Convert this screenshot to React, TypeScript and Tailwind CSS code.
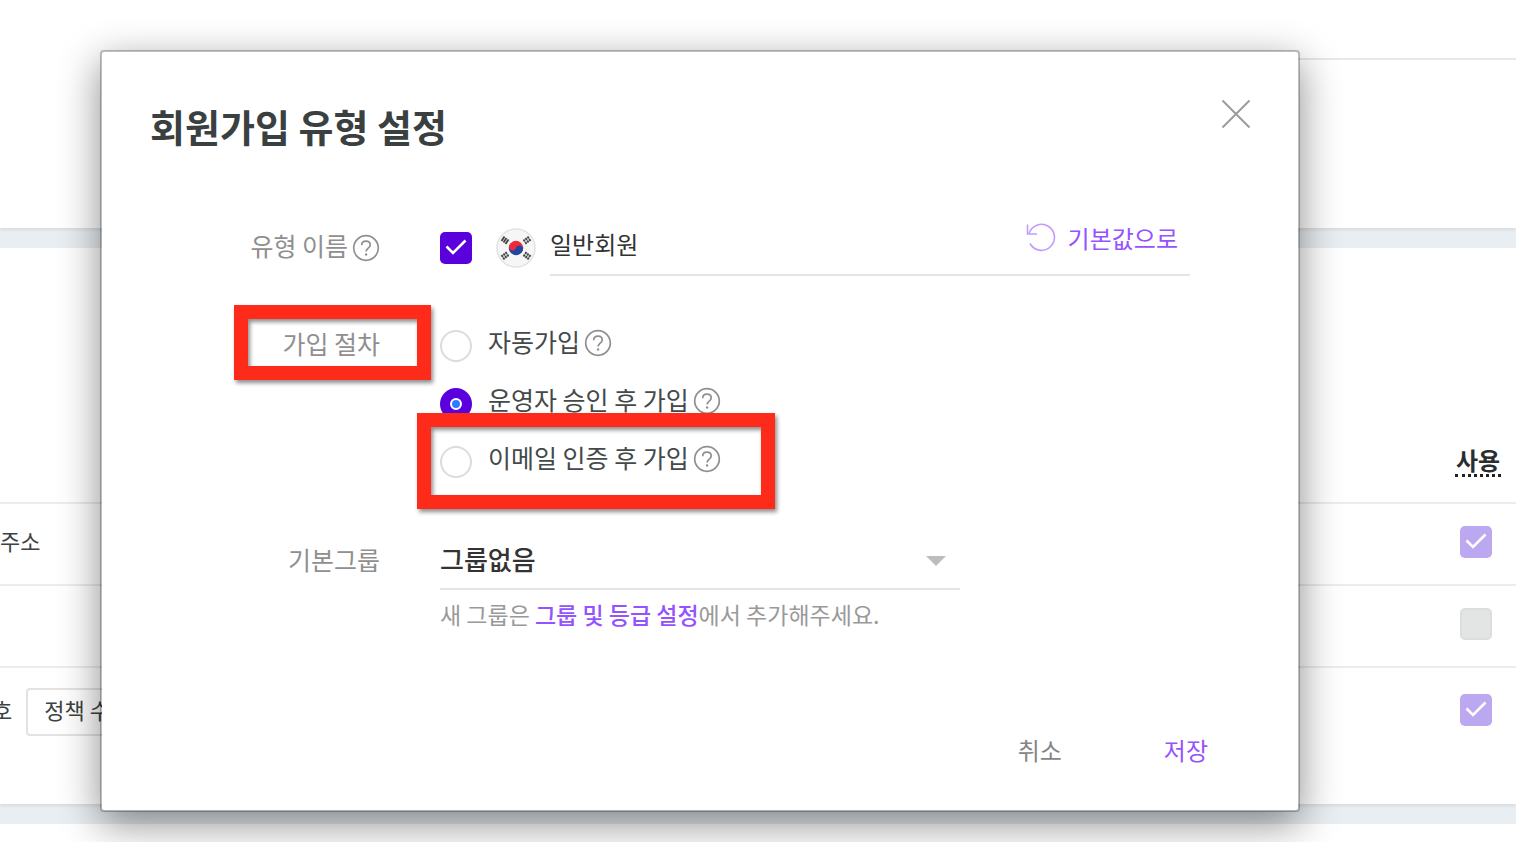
import React, { useState } from 'react'

const CheckMark = () => (
    <svg viewBox="0 0 32 32" className="pointer-events-none col-start-1 row-start-1 size-8" fill="none" stroke="white" strokeWidth="2.6" aria-hidden="true">
        <path d="M6.500 14.500l6.500 6.500L25.500 8.500" />
    </svg>
)

const HelpButton = () => (
    <button type="button" aria-label="도움말" className="ml-1 shrink-0">
        <svg viewBox="0 0 28 28" className="size-7" fill="none" stroke="#8f8f8f" strokeWidth="1.7" aria-hidden="true">
            <circle cx="14" cy="14" r="12.300" />
            <path d="M9.700 11.200c0-2.500 1.800-4 4.300-4s4.200 1.500 4.200 3.700c0 3.200-4.100 3.200-4.100 6.600" />
            <circle cx="14.100" cy="20.500" r="1.200" fill="#8f8f8f" stroke="none" />
        </svg>
    </button>
)

const KoreaFlag = () => (
    <svg viewBox="0 0 40 40" className="size-10 shrink-0" role="img" aria-label="대한민국">
        <circle cx="20" cy="20" r="19" fill="#f6f6f6" stroke="#e2e2e2" strokeWidth="1.500" />
        <g transform="rotate(20 20 20)">
            <path d="M12.800 20a7.200 7.200 0 0 1 14.400 0z" fill="#ee2b3b" />
            <path d="M12.800 20a7.200 7.200 0 0 0 14.400 0z" fill="#23469f" />
            <circle cx="16.400" cy="20" r="3.600" fill="#ee2b3b" />
            <circle cx="23.600" cy="20" r="3.600" fill="#23469f" />
        </g>
        <g stroke="#444" strokeWidth="1.900">
            <path d="M5.500 13l3-4.500M7.500 14.500l3-4.500M9.500 16l3-4.500" />
            <path d="M34.500 13l-3-4.500M32.500 14.500l-3-4.500M30.500 16l-3-4.500" strokeDasharray="2.300 0.800" />
            <path d="M5.500 27l3 4.500M7.500 25.500l3 4.500M9.500 24l3 4.500" strokeDasharray="2.300 0.800" />
            <path d="M34.500 27l-3 4.500M32.500 25.500l-3 4.500M30.500 24l-3 4.500" strokeDasharray="2.300 0.800" />
        </g>
    </svg>
)

const Highlight = ({ className }: { className: string }) => (
    <div className={`pointer-events-none absolute border-[14px] border-[#ff2b1a] drop-shadow-[2px_3px_2px_rgba(0,0,0,0.45)] ${className}`} />
)

interface IRowProps {
    id: string
    checked: boolean
    last?: boolean
    children?: React.ReactNode
}
const FieldRow = ({ id, checked, last, children }: IRowProps) => (
    <tr className={last ? '' : 'border-b-2 border-[#ececec]'}>
        <td className={last ? 'h-[84px] p-0 pt-1' : 'h-[82px] p-0 pb-2'}>{children}</td>
        <td className={last ? 'w-20 p-0' : 'w-20 p-0 pb-1'}>
            <label htmlFor={id} className="mx-auto grid size-8">
                <input
                    id={id}
                    type="checkbox"
                    aria-label="사용"
                    defaultChecked={checked}
                    disabled
                    className="col-start-1 row-start-1 size-8 appearance-none rounded-[5px] border-2 border-[#dcdedd] bg-[#e3e5e4] checked:border-0 checked:bg-[#bba8f1]"
                />
                {checked && <CheckMark />}
            </label>
        </td>
    </tr>
)

const SettingsPage = () => (
    <div className="flex min-h-screen flex-col gap-5 bg-[#e9eef2] text-[#3d4242]">
        <section className="h-[228px] bg-white pt-[58px] shadow-[0_2px_3px_rgba(0,0,0,0.08)]">
            <div className="ml-auto w-1/5 border-t-2 border-[#e8e8e8]" />
        </section>
        <section className="bg-white pt-[170px] pb-[53px] shadow-[0_2px_3px_rgba(0,0,0,0.08)]">
            <table className="w-full border-collapse text-[22px]">
                <thead>
                    <tr className="border-b-2 border-[#ececec]">
                        <th className="h-[85px]" />
                        <th className="w-20 p-0 pl-1 text-center text-2xl font-bold text-[#2b2e2e]">
                            <span className="inline-block border-b-3 border-dotted border-[#222] px-px leading-7">사용</span>
                        </th>
                    </tr>
                </thead>
                <tbody>
                    <FieldRow id="use-email" checked>주소</FieldRow>
                    <FieldRow id="use-name" checked={false} />
                    <FieldRow id="use-password" checked last>
                        <div className="-ml-2 flex items-center">
                            <span className="pb-1">호</span>
                            <button type="button" className="ml-[14px] h-12 rounded border-2 border-[#e3e3e3] px-4 pb-1 text-[22px]">정책 수정</button>
                        </div>
                    </FieldRow>
                </tbody>
            </table>
        </section>
        <section className="flex-1 bg-white" />
    </div>
)

const joinTypes = [
    { value: 'auto', label: '자동가입' },
    { value: 'approve', label: '운영자 승인 후 가입' },
    { value: 'email', label: '이메일 인증 후 가입' },
]

const JoinTypeDialog = () => {
    const [joinType, setJoinType] = useState('approve')
    const [enabled, setEnabled] = useState(true)
    const [name, setName] = useState('일반회원')

    return (
        <div role="dialog" aria-labelledby="dialog-title" className="w-full rounded border-2 border-black/25 bg-white bg-clip-padding shadow-[0_12px_40px_rgba(0,0,0,0.45)]">
            <header className="flex items-start justify-between pt-[46px] pr-[46px] pl-12">
                <h1 id="dialog-title" className="pt-0.5 pb-0.5 text-[38px] leading-[52px] font-bold text-[#3a3f3f]">회원가입 유형 설정</h1>
                <button type="button" aria-label="닫기">
                    <svg viewBox="0 0 32 32" className="size-8" stroke="#9b9b9b" strokeWidth="2" aria-hidden="true">
                        <path d="M2.500 2.500l27 27M29.500 2.500l-27 27" />
                    </svg>
                </button>
            </header>

            <form className="grid grid-cols-[278px_1fr] gap-x-[60px] gap-y-10 pt-[66px] pr-[108px]">
                <div className="flex h-14 items-center justify-end text-[25px] text-[#8f8f8f]">
                    <label htmlFor="type-name" className="pb-1">유형 이름</label>
                    <HelpButton />
                </div>
                <div className="flex h-14 items-center">
                    <label className="grid size-8 shrink-0">
                        <input
                            type="checkbox"
                            aria-label="한국어 사용"
                            checked={enabled}
                            onChange={(e) => setEnabled(e.target.checked)}
                            className="col-start-1 row-start-1 size-8 appearance-none rounded-[5px] border-2 border-[#ccd3d8] checked:border-0 checked:bg-[#5a00dc]"
                        />
                        {enabled && <CheckMark />}
                    </label>
                    <div className="mr-[14px] ml-6">
                        <KoreaFlag />
                    </div>
                    <div className="flex h-14 min-w-0 flex-1 items-center border-b-2 border-[#e4e4e4] pr-3 pb-1.5">
                        <input
                            id="type-name"
                            type="text"
                            value={name}
                            onChange={(e) => setName(e.target.value)}
                            className="min-w-0 flex-1 text-2xl text-[#333] outline-none"
                        />
                        <button type="button" onClick={() => setName('일반회원')} className="flex items-center gap-3 pb-3 text-2xl text-[#9552ff]">
                            <svg viewBox="0 0 30 30" className="size-[30px]" fill="none" stroke="#c39bff" strokeWidth="1.600" aria-hidden="true">
                                <path d="M1.500 1.500v9.500H11" />
                                <path d="M3 10.500A13 13 0 1 1 4 20.500" />
                            </svg>
                            기본값으로
                        </button>
                    </div>
                </div>

                <div className="relative flex h-[58px] items-center justify-end pb-0.5 text-[25px] text-[#8f8f8f]">
                    <span id="join-label">가입 절차</span>
                    <Highlight className="-top-[11px] left-[132px] h-[75px] w-[197px]" />
                </div>
                <div role="radiogroup" aria-labelledby="join-label" className="relative">
                    {joinTypes.map((type) => (
                        <div key={type.value} className="flex h-[58px] items-center pb-0.5">
                            <label className="flex items-center gap-4 text-[25px] text-[#444949]">
                                <span className="mt-1 grid size-8 place-items-center">
                                    <input
                                        type="radio"
                                        name="join-type"
                                        value={type.value}
                                        checked={joinType === type.value}
                                        onChange={() => setJoinType(type.value)}
                                        className="col-start-1 row-start-1 size-8 appearance-none rounded-full border-2 border-[#d7dde0] checked:border-0 checked:bg-[#5a00dc]"
                                    />
                                    {joinType === type.value && (
                                        <span className="pointer-events-none col-start-1 row-start-1 size-3 rounded-full border-2 border-white bg-[#2f7bff]" />
                                    )}
                                </span>
                                <span className="pb-1">{type.label}</span>
                            </label>
                            <div className="flex pb-0.5">
                                <HelpButton />
                            </div>
                        </div>
                    ))}
                    <Highlight className="top-[97px] -left-[23px] h-24 w-[358px]" />
                </div>

                <label htmlFor="base-group" className="flex h-[60px] items-center justify-end text-[25px] text-[#8f8f8f]">기본그룹</label>
                <div>
                    <div className="grid max-w-[520px] items-center border-b-2 border-[#e4e4e4]">
                        <select id="base-group" className="col-start-1 row-start-1 h-[58px] w-full appearance-none pb-0.5 text-[26px] font-medium text-[#333] outline-none">
                            <option>그룹없음</option>
                        </select>
                        <svg viewBox="0 0 20 10" className="pointer-events-none col-start-1 row-start-1 mt-1 mr-[14px] h-[10px] w-5 justify-self-end" fill="#bdbdbd" aria-hidden="true">
                            <path d="M0 0h20L10 10z" />
                        </svg>
                    </div>
                    <p className="pt-1.5 text-[23px] leading-9 text-[#999]">
                        새 그룹은 <a href="#groups" className="font-medium text-[#9552ff]">그룹 및 등급 설정</a>에서 추가해주세요.
                    </p>
                </div>
            </form>

            <footer className="flex justify-end gap-[102px] pt-[98px] pr-[90px] pb-10 text-2xl leading-10">
                <button type="button" className="text-[#858585]">취소</button>
                <button type="button" className="text-[#9552ff]">저장</button>
            </footer>
        </div>
    )
}

export default function App() {
    return (
        <div className="relative h-screen overflow-hidden font-['Noto_Sans_CJK_KR',sans-serif]">
            <SettingsPage />
            <div className="absolute inset-0 flex items-start pt-[50px] pr-[216px] pl-[100px]">
                <JoinTypeDialog />
            </div>
        </div>
    )
}
